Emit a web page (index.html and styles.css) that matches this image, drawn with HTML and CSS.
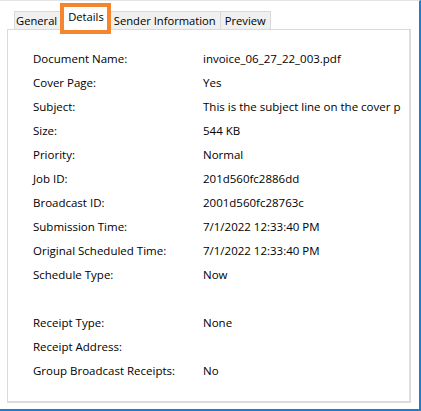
FILE: index.html
```html
<!DOCTYPE html>
<html>
<head>
<meta charset="utf-8">
<link rel="stylesheet" href="styles.css">
</head>
<body>
<div class="window">
  <div class="tabs">
    <div class="tab">General</div>
    <div class="tab active">Details</div>
    <div class="tab">Sender Information</div>
    <div class="tab">Preview</div>
  </div>
  <div class="panel">
    <div class="row"><span class="label">Document Name:</span><span class="value">invoice_06_27_22_003.pdf</span></div>
    <div class="row"><span class="label">Cover Page:</span><span class="value">Yes</span></div>
    <div class="row"><span class="label">Subject:</span><span class="value">This is the subject line on the cover p</span></div>
    <div class="row"><span class="label">Size:</span><span class="value">544 KB</span></div>
    <div class="row"><span class="label">Priority:</span><span class="value">Normal</span></div>
    <div class="row"><span class="label">Job ID:</span><span class="value">201d560fc2886dd</span></div>
    <div class="row"><span class="label">Broadcast ID:</span><span class="value">2001d560fc28763c</span></div>
    <div class="row"><span class="label">Submission Time:</span><span class="value">7/1/2022 12:33:40 PM</span></div>
    <div class="row"><span class="label">Original Scheduled Time:</span><span class="value">7/1/2022 12:33:40 PM</span></div>
    <div class="row"><span class="label">Schedule Type:</span><span class="value">Now</span></div>
    <div class="row spacer"></div>
    <div class="row"><span class="label">Receipt Type:</span><span class="value">None</span></div>
    <div class="row"><span class="label">Receipt Address:</span><span class="value"></span></div>
    <div class="row"><span class="label">Group Broadcast Receipts:</span><span class="value">No</span></div>
  </div>
</div>
</body>
</html>
```

FILE: styles.css
```css
html, body {
  margin: 0;
  padding: 0;
  background: #ffffff;
}
body {
  font-family: "Open Sans", "Noto Sans", sans-serif;
  font-size: 11.5px;
  color: #000000;
}
.window {
  width: 419px;
  height: 408px;
  border-top: 1px solid #e3e3e3;
  border-right: 2px solid #1a7fd4;
  border-bottom: 2px solid #1a7fd4;
  background: #ffffff;
  display: flex;
  flex-direction: column;
}
.tabs {
  display: flex;
  align-items: flex-end;
  margin-top: 2px;
  padding-left: 14px;
  height: 26px;
  position: relative;
  z-index: 2;
}
.tab {
  box-sizing: border-box;
  height: 18px;
  border: 1px solid #d9d9d9;
  border-bottom: none;
  background: #f0f0f0;
  line-height: 17px;
  padding: 0 4px 0 4px;
  margin-left: -1px;
  white-space: nowrap;
  font-size: 11.2px;
}
.tab:first-child { margin-left: 0; padding: 0 5px 0 1px; }
.tab.active {
  height: 31px;
  margin-left: -3px;
  margin-right: -1px;
  margin-bottom: -5px;
  border: 4px solid #f5862e;
  background: #ffffff;
  line-height: 20px;
  padding: 0 3px 0 4px;
  position: relative;
  z-index: 3;
}
.panel {
  margin-left: 7px;
  width: 404px;
  height: 374px;
  box-sizing: border-box;
  border: 1px solid #d9d9d9;
  border-right: 2px solid #dcdcdc;
  border-bottom: 2px solid #dcdcdc;
  padding: 17px 0 0 25px;
  display: flex;
  flex-direction: column;
}
.row {
  display: flex;
  height: 24px;
  line-height: 24px;
}
.label {
  width: 170px;
  flex: none;
}
.value {
  white-space: nowrap;
}
```
